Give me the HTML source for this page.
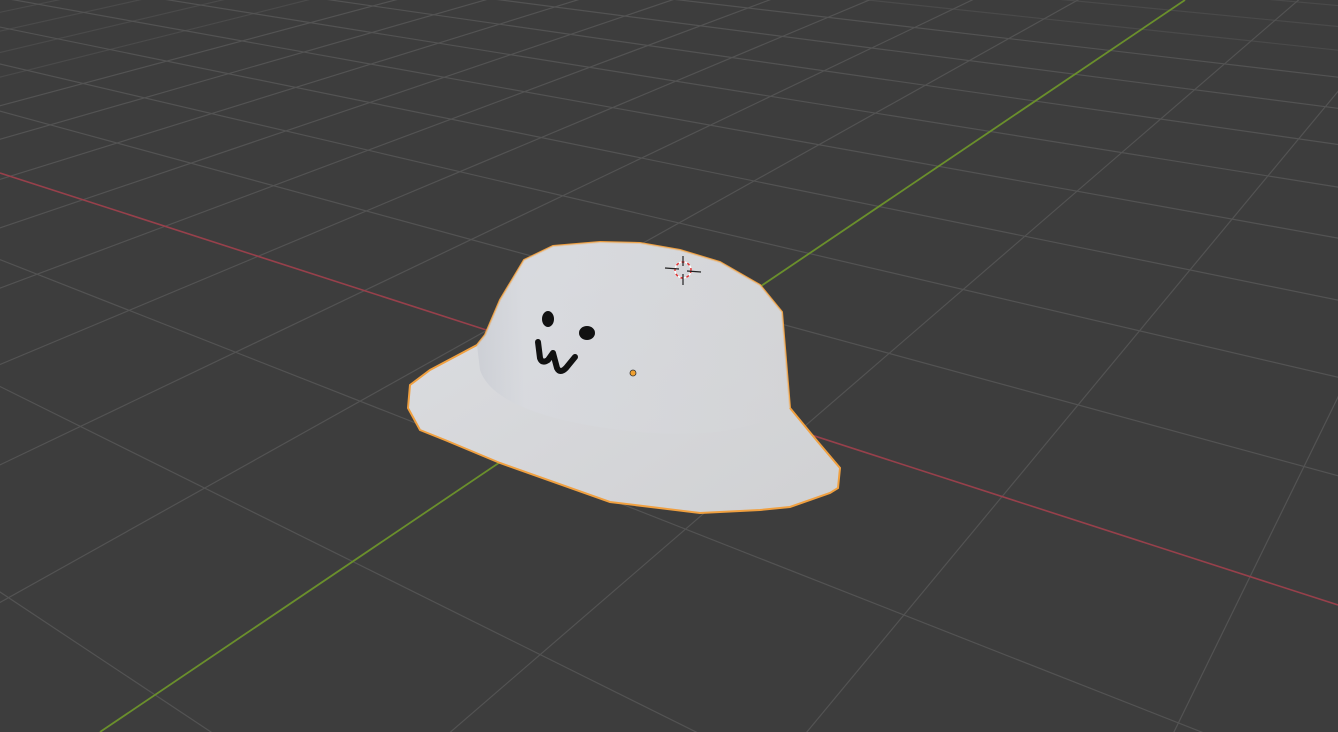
<!DOCTYPE html>
<html><head><meta charset="utf-8"><style>
html,body{margin:0;padding:0;background:#3d3d3d;overflow:hidden;width:1338px;height:732px}
svg{display:block;position:absolute;left:0;top:0}
</style></head><body>
<svg id="s" width="1338" height="732" viewBox="0 0 1338 732" xmlns="http://www.w3.org/2000/svg" overflow="hidden">
<defs>
<linearGradient id="hat" x1="0" y1="0" x2="1" y2="1">
<stop offset="0" stop-color="#dcdee2"/><stop offset="0.5" stop-color="#d6d7da"/><stop offset="1" stop-color="#d0d1d3"/>
</linearGradient>
<linearGradient id="crown" x1="0" y1="0" x2="1" y2="0">
<stop offset="0" stop-color="#c8cbd2"/><stop offset="0.15" stop-color="#d8dadf"/><stop offset="1" stop-color="#d3d4d6"/>
</linearGradient>
</defs>
<rect width="1338" height="732" fill="#3d3d3d"/>
<g id="grid" stroke="#535353" stroke-width="1.2" fill="none"></g>
<line x1="0" y1="173" x2="1338" y2="605" stroke="#97404b" stroke-width="1.6"/>
<line x1="1185" y1="0" x2="100" y2="732" stroke="#6a8f2c" stroke-width="1.8"/>
<path d="M524,260 L553,246 L600,242 L640,243 L680,250 L720,262 L760,285 L782,312 L790,408 L818,442 L840,468 L838,488 L830,493 L790,507 L760,510 L700,513 L610,502 L500,463 L445,440 L420,430 L408,408 L410,385 L430,370 L477,345 L485,335 L500,300 Z" fill="url(#hat)" stroke="#f0a040" stroke-width="2"/>
<path d="M524,260 L553,246 L600,242 L640,243 L680,250 L720,262 L760,285 L782,312 L790,408 C760,430 700,440 620,430 C540,420 490,400 480,370 L477,345 L485,335 L500,300 Z" fill="url(#crown)" opacity="0.7"/>
<ellipse cx="548" cy="319" rx="6" ry="8" fill="#111"/>
<ellipse cx="587" cy="333" rx="8" ry="7" fill="#111"/>
<path d="M538,342 L540,358 Q542,364 548,360 L553,353 L557,368 Q560,374 566,368 L575,357" fill="none" stroke="#111" stroke-width="6" stroke-linecap="round" stroke-linejoin="round"/>
<circle cx="633" cy="373" r="3" fill="#f0a030" stroke="#333" stroke-width="0.8"/>
<circle cx="683" cy="270" r="8" fill="none" stroke="#ffffff" stroke-width="1.5"/>
<circle cx="683" cy="270" r="8" fill="none" stroke="#e03030" stroke-width="1.5" stroke-dasharray="3 3"/>
<line x1="665" y1="268" x2="679" y2="269" stroke="#222" stroke-width="1.2"/>
<line x1="687" y1="271" x2="701" y2="272" stroke="#222" stroke-width="1.2"/>
<line x1="683" y1="256" x2="683" y2="266" stroke="#222" stroke-width="1.2"/>
<line x1="683" y1="274" x2="683" y2="285" stroke="#222" stroke-width="1.2"/>
</svg>
<script>
(function(){
var g=document.getElementById('grid'),NS='http://www.w3.org/2000/svg';
function ln(vx,vy,px,py,op){var e=document.createElementNS(NS,'line');
var dx=px-vx,dy=py-vy,L=Math.sqrt(dx*dx+dy*dy);
e.setAttribute('x1',vx);e.setAttribute('y1',vy);
e.setAttribute('x2',vx+dx/L*3000);e.setAttribute('y2',vy+dy/L*3000);
e.setAttribute('stroke-opacity',op);g.appendChild(e);}
var V1=[-1230,-224],V2=[1704,-350];
for(var k=-16;k<=11;k++){if(k==0)continue;
var x=-1230+22320/(12-k),y=173+0.323*x;
ln(V2[0],V2[1],x,y,k<-8?0.6:1);}
for(var m=-16;m<=9;m++){if(m==0)continue;
var yy=-350+1/(0.001377-0.00014*m),xx=1185-1.482*yy;
ln(V1[0],V1[1],xx,yy,m<-8?0.6:1);}
})();
</script>
</body></html>
